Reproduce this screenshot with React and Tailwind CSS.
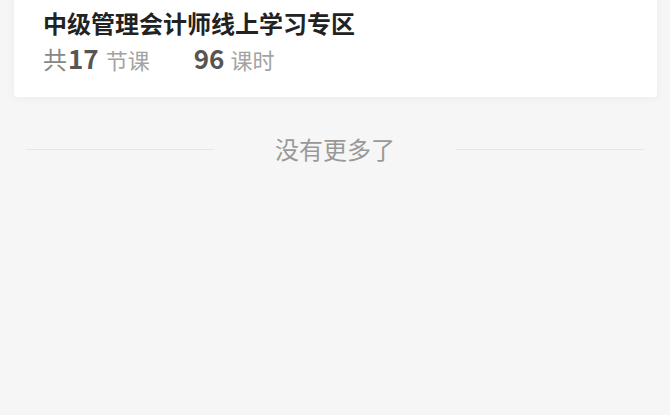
export default function App() {
  return (
    <div
      className="w-[670px] h-[415px] overflow-hidden bg-[#f6f6f6]"
      style={{ fontFamily: '"Noto Sans CJK SC", "Noto Sans", sans-serif' }}
    >
      <div className="mx-[14px] -mt-[10px] rounded-[3px] bg-white pl-[29px] pt-[17px] pb-[22px] shadow-[0_1px_8px_rgba(0,0,0,0.05)] w-[643px]">
        <div className="text-[24px] leading-[32px] font-bold text-[#222]">中级管理会计师线上学习专区</div>
        <div className="mt-[3px] flex items-baseline leading-[32px]">
          <span className="text-[24px] text-[#888]">共</span>
          <span className="text-[26px] font-bold text-[#555] ml-[1px]">17</span>
          <span className="text-[22px] text-[#a3a3a3] ml-[7px]">节课</span>
          <span className="text-[26px] font-bold text-[#555] ml-[44px]">96</span>
          <span className="text-[22px] text-[#a3a3a3] ml-[6px]">课时</span>
        </div>
      </div>
      <div className="mt-[37px] flex items-center px-[26px]">
        <div className="flex-1 h-px bg-[#e6e6e6]" />
        <div className="mx-[61px] text-[24px] leading-[30px] text-[#999]">没有更多了</div>
        <div className="flex-1 h-px bg-[#e6e6e6]" />
      </div>
    </div>
  );
}
